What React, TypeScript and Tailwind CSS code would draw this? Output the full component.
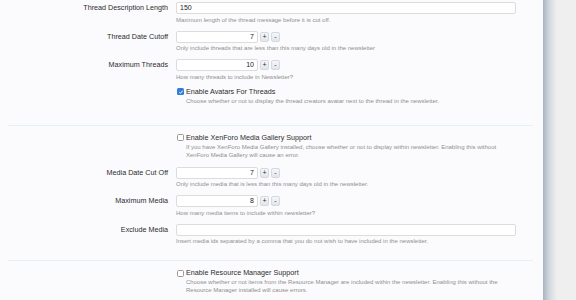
import type { ReactNode } from 'react'

const font = { fontFamily: '"Liberation Sans", Arial, sans-serif' }

const labelCls = 'w-[168px] shrink-0 text-right text-[7.2px] leading-[12px] text-[#2b2b2b]'
const explainCls = 'text-[6px] leading-[8px] text-[#8f8f8f]'
const inputCls = 'h-[12px] rounded-[2px] border border-[#dcdcdc] bg-white text-[7px] leading-[10px] text-[#222] px-[3px]'
const spinBtn = 'w-[9px] h-[10px] rounded-[2px] border border-[#d4d8e0] bg-gradient-to-b from-[#f6f7fa] to-[#e2e5ec] text-[7px] leading-[8px] text-[#333] flex items-center justify-center'

function Row({ label, explain, mt, children }: { label: string; explain: ReactNode; mt: string; children: ReactNode }) {
  return (
    <div className={`flex ${mt}`}>
      <div className={labelCls}>{label}</div>
      <div className="ml-[8px] flex flex-col">
        {children}
        <p className={`${explainCls} mt-[1.5px]`}>{explain}</p>
      </div>
    </div>
  )
}

function Spinner({ value }: { value: string }) {
  return (
    <div className="flex items-center gap-[2px]">
      <div className={`${inputCls} w-[82px] text-right`}>{value}</div>
      <div className={spinBtn}>+</div>
      <div className={spinBtn}>-</div>
    </div>
  )
}

function Check({ checked, label, explain, mt }: { checked?: boolean; label: string; explain: ReactNode; mt: string }) {
  return (
    <div className={`flex ${mt}`}>
      <div className="w-[168px] shrink-0" />
      <div className="ml-[9px] flex flex-col">
        <div className="flex items-center gap-[2px]">
          {checked ? (
            <span className="w-[7px] h-[7px] rounded-[1.5px] bg-[#2f7fd8] flex items-center justify-center">
              <svg viewBox="0 0 10 10" className="w-[6px] h-[6px]">
                <path d="M2 5.2 L4.2 7.2 L8 2.8" stroke="white" strokeWidth="1.6" fill="none" />
              </svg>
            </span>
          ) : (
            <span className="w-[7px] h-[7px] rounded-[1.5px] border border-[#9a9a9a] bg-white" />
          )}
          <span className="text-[7.2px] leading-[10px] text-[#2b2b2b]">{label}</span>
        </div>
        <p className={`${explainCls} pl-[9px]`}>{explain}</p>
      </div>
    </div>
  )
}

export default function App() {
  return (
    <div style={font} className="w-[576px] h-[300px] overflow-hidden flex bg-[#efefef]">
      <div className="w-[543px] h-full bg-[#fbfbfd] flex flex-col">
        <Row label="Thread Description Length" explain="Maximum length of the thread message before it is cut off." mt="mt-[2px]">
          <div className={`${inputCls} w-[340px]`}>150</div>
        </Row>
        <Row label="Thread Date Cutoff" explain="Only include threads that are less than this many days old in the newsletter" mt="mt-[7px]">
          <Spinner value="7" />
        </Row>
        <Row label="Maximum Threads" explain="How many threads to include in Newsletter?" mt="mt-[7px]">
          <Spinner value="10" />
        </Row>
        <Check checked label="Enable Avatars For Threads" explain="Choose whether or not to display the thread creators avatar next to the thread in the newsletter." mt="mt-[6px]" />

        <div className="mt-[20px] ml-[8px] w-[525px] h-px bg-[#e4f0f3]" />

        <Check
          label="Enable XenForo Media Gallery Support"
          explain={<>If you have XenForo Media Gallery installed, choose whether or not to display within newsletter. Enabling this without<br />XenForo Media Gallery will cause an error.</>}
          mt="mt-[7px]"
        />
        <Row label="Media Date Cut Off" explain="Only include media that is less than this many days old in the newsletter." mt="mt-[8px]">
          <Spinner value="7" />
        </Row>
        <Row label="Maximum Media" explain="How many media items to include within newsletter?" mt="mt-[7px]">
          <Spinner value="8" />
        </Row>
        <Row label="Exclude Media" explain="Insert media ids separated by a comma that you do not wish to have included in the newsletter." mt="mt-[7px]">
          <div className={`${inputCls} w-[340px]`} />
        </Row>

        <div className="mt-[15px] ml-[8px] w-[525px] h-px bg-[#e4f0f3]" />

        <Check
          label="Enable Resource Manager Support"
          explain={<>Choose whether or not items from the Resource Manager are included within the newsletter. Enabling this without the<br />Resource Manager installed will cause errors.</>}
          mt="mt-[7px]"
        />
      </div>
      <div className="w-[14px] h-full bg-gradient-to-r from-[#a9b4c2] via-[#d6dbe1] to-[#efefef]" />
    </div>
  )
}
